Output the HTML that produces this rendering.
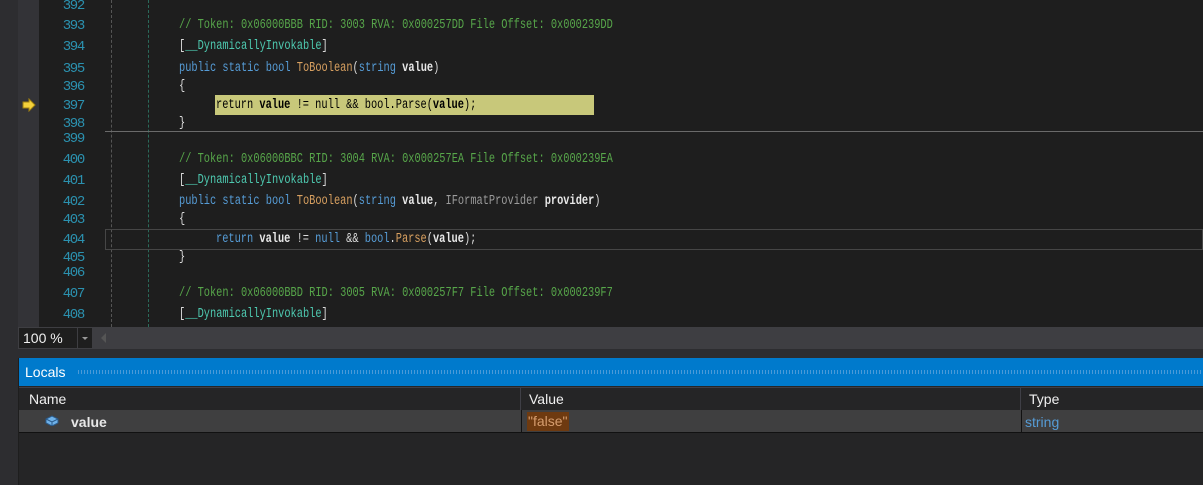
<!DOCTYPE html><html><head><style>
body{margin:0;width:1203px;height:485px;overflow:hidden;background:#1e1e1e;position:relative;font-family:"Liberation Sans",sans-serif}
.a{position:absolute}
.ln{position:absolute;left:40px;width:44px;text-align:right;color:#2b91af;font:14px/20px "Liberation Mono",monospace;letter-spacing:-1.3px;margin-top:1px}
.c{position:absolute;white-space:pre;color:#dcdcdc;font:13.5px/20px "Liberation Mono",monospace;transform:scaleX(.765);transform-origin:left center;margin-top:1px}
.k{color:#569cd6}.cm{color:#57a64a}.t{color:#4ec9b0}.m{color:#d8a060}.g{color:#9b9b9b}.b{font-weight:bold;color:#e8e8e8}
</style></head><body>
<div class="a" style="left:0;top:0;width:18px;height:485px;background:#2d2d30"></div>
<div class="a" style="left:18px;top:0;width:21px;height:327px;background:#333337"></div>
<div class="a" style="left:111px;top:0;height:327px;border-left:1px dashed #555"></div>
<div class="a" style="left:148px;top:0;height:327px;border-left:1px dashed #2a6a5a"></div>
<div class="a" style="left:105px;top:131px;width:1098px;height:1px;background:#6a6a6a"></div>
<div class="a" style="left:105px;top:229px;width:1096px;height:19px;border:1px solid #464646"></div>
<div class="a" style="left:215px;top:95px;width:379px;height:20px;background:#c8c87a"></div>
<svg class="a" style="left:22px;top:98px" width="14" height="14"><path d="M1 4h6V1l6 6-6 6V10H1z" fill="#f5d23b" stroke="#a08010"/></svg>
<div class="ln" style="top:-5px">392</div>
<div class="ln" style="top:15px">393</div>
<div class="ln" style="top:36px">394</div>
<div class="ln" style="top:58px">395</div>
<div class="ln" style="top:76px">396</div>
<div class="ln" style="top:95px">397</div>
<div class="ln" style="top:113px">398</div>
<div class="ln" style="top:128px">399</div>
<div class="ln" style="top:149px">400</div>
<div class="ln" style="top:170px">401</div>
<div class="ln" style="top:191px">402</div>
<div class="ln" style="top:209px">403</div>
<div class="ln" style="top:229px">404</div>
<div class="ln" style="top:247px">405</div>
<div class="ln" style="top:262px">406</div>
<div class="ln" style="top:283px">407</div>
<div class="ln" style="top:304px">408</div>
<div class="c cm" style="left:179px;top:15px">// Token: 0x06000BBB RID: 3003 RVA: 0x000257DD File Offset: 0x000239DD</div>
<div class="c" style="left:179px;top:36px">[<span class="t">__DynamicallyInvokable</span>]</div>
<div class="c" style="left:179px;top:58px"><span class="k">public static bool</span> <span class="m">ToBoolean</span>(<span class="k">string</span> <span class="b">value</span>)</div>
<div class="c" style="left:179px;top:76px">{</div>
<div class="c" style="left:216px;top:95px;color:#000">return <b>value</b> != null &amp;&amp; bool.Parse(<b>value</b>);</div>
<div class="c" style="left:179px;top:113px">}</div>
<div class="c cm" style="left:179px;top:149px">// Token: 0x06000BBC RID: 3004 RVA: 0x000257EA File Offset: 0x000239EA</div>
<div class="c" style="left:179px;top:170px">[<span class="t">__DynamicallyInvokable</span>]</div>
<div class="c" style="left:179px;top:191px"><span class="k">public static bool</span> <span class="m">ToBoolean</span>(<span class="k">string</span> <span class="b">value</span>, <span class="g">IFormatProvider</span> <span class="b">provider</span>)</div>
<div class="c" style="left:179px;top:209px">{</div>
<div class="c" style="left:216px;top:229px"><span class="k">return</span> <span class="b">value</span> != <span class="k">null</span> &amp;&amp; <span class="k">bool</span>.<span class="m">Parse</span>(<span class="b">value</span>);</div>
<div class="c" style="left:179px;top:247px">}</div>
<div class="c cm" style="left:179px;top:283px">// Token: 0x06000BBD RID: 3005 RVA: 0x000257F7 File Offset: 0x000239F7</div>
<div class="c" style="left:179px;top:304px">[<span class="t">__DynamicallyInvokable</span>]</div>
<div class="a" style="left:18px;top:327px;width:1185px;height:22px;background:#3e3e42"></div>
<div class="a" style="left:19px;top:328px;width:58px;height:20px;background:#1e1e1e;color:#f0f0f0;font-size:14px;line-height:20px;text-indent:4px">100 %</div>
<div class="a" style="left:78px;top:328px;width:14px;height:20px;background:#1e1e1e"></div>
<div class="a" style="left:82px;top:337px;border:3px solid transparent;border-top-color:#999"></div>
<div class="a" style="left:101px;top:333px;border:5px solid transparent;border-right-color:#555;border-left:0"></div>
<div class="a" style="left:18px;top:349px;width:1185px;height:9px;background:#2d2d30"></div>
<div class="a" style="left:19px;top:358px;width:1184px;height:28px;background:#007acc"></div>
<div class="a" style="left:25px;top:358px;color:#fff;font-size:14px;line-height:28px">Locals</div>
<div class="a" style="left:78px;top:370px;width:1125px;height:4px;background:repeating-linear-gradient(90deg,#4a9ad8 0 1px,transparent 1px 3px)"></div>
<div class="a" style="left:19px;top:386px;width:1184px;height:99px;background:#252526"></div>
<div class="a" style="left:19px;top:387px;width:1184px;height:23px;background:#252526;border-top:1px solid #3f3f46"></div>
<div class="a" style="left:29px;top:388px;color:#f0f0f0;font-size:14px;line-height:22px">Name</div>
<div class="a" style="left:520px;top:387px;width:1px;height:23px;background:#3f3f46"></div>
<div class="a" style="left:529px;top:388px;color:#f0f0f0;font-size:14px;line-height:22px">Value</div>
<div class="a" style="left:1020px;top:387px;width:1px;height:23px;background:#3f3f46"></div>
<div class="a" style="left:1029px;top:388px;color:#f0f0f0;font-size:14px;line-height:22px">Type</div>
<div class="a" style="left:19px;top:410px;width:1184px;height:22px;background:#3f3f40;border-bottom:1px solid #111"></div>
<svg class="a" style="left:45px;top:414px" width="14" height="12"><path d="M1 5l6-3 6 3v4l-6 3-6-3z" fill="#6fb1e8" stroke="#2a5a8a"/><path d="M1 5l6 3 6-3M7 8v4" fill="none" stroke="#2a5a8a"/></svg>
<div class="a" style="left:71px;top:411px;color:#e8e8e8;font-size:14px;font-weight:bold;line-height:22px">value</div>
<div class="a" style="left:521px;top:410px;width:1px;height:22px;background:#111"></div>
<div class="a" style="left:527px;top:412px;height:19px;padding:0 1px;background:#6e3a10;color:#d69d6e;font-size:14px;line-height:19px">"false"</div>
<div class="a" style="left:1021px;top:410px;width:1px;height:22px;background:#111"></div>
<div class="a" style="left:1025px;top:411px;color:#569cd6;font-size:14px;line-height:22px">string</div>
</body></html>
